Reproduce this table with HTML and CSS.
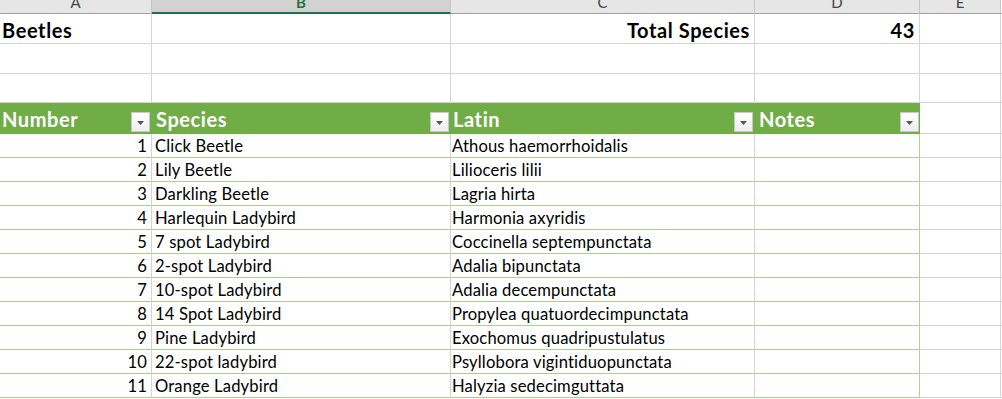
FILE: index.html
```html
<!DOCTYPE html>
<html>
<head>
<meta charset="utf-8">
<link rel="stylesheet" href="styles.css">
</head>
<body>
<div class="sheet">
  <div class="row colhead">
    <div class="ch"><span>A</span></div>
    <div class="ch sel"><span>B</span></div>
    <div class="ch"><span>C</span></div>
    <div class="ch"><span>D</span></div>
    <div class="ch"><span>E</span></div>
    <div class="ch last"></div>
  </div>
  <div class="row tall">
    <div class="c bold">Beetles</div>
    <div class="c"></div>
    <div class="c bold right">Total Species</div>
    <div class="c bold right">43</div>
    <div class="c"></div>
    <div class="c last"></div>
  </div>
  <div class="row tall">
    <div class="c"></div><div class="c"></div><div class="c"></div><div class="c"></div><div class="c"></div><div class="c last"></div>
  </div>
  <div class="row r3">
    <div class="c"></div><div class="c"></div><div class="c"></div><div class="c"></div><div class="c"></div><div class="c last"></div>
  </div>
  <div class="row thead">
    <div class="h"><span>Number</span><i class="dd"><svg width="7" height="4" viewBox="0 0 7 4"><path d="M0 0H7L3.5 4Z" fill="#555"/></svg></i></div>
    <div class="h"><span>Species</span><i class="dd"><svg width="7" height="4" viewBox="0 0 7 4"><path d="M0 0H7L3.5 4Z" fill="#555"/></svg></i></div>
    <div class="h hc"><span>Latin</span><i class="dd"><svg width="7" height="4" viewBox="0 0 7 4"><path d="M0 0H7L3.5 4Z" fill="#555"/></svg></i></div>
    <div class="h hd"><span>Notes</span><i class="dd"><svg width="7" height="4" viewBox="0 0 7 4"><path d="M0 0H7L3.5 4Z" fill="#555"/></svg></i></div>
    <div class="c"></div>
    <div class="c last"></div>
  </div>
  <div class="row data"><div class="c t right">1</div><div class="c t">Click Beetle</div><div class="c t tc">Athous haemorrhoidalis</div><div class="c t td"></div><div class="c"></div><div class="c last"></div></div>
  <div class="row data"><div class="c t right">2</div><div class="c t">Lily Beetle</div><div class="c t tc">Lilioceris lilii</div><div class="c t td"></div><div class="c"></div><div class="c last"></div></div>
  <div class="row data"><div class="c t right">3</div><div class="c t">Darkling Beetle</div><div class="c t tc">Lagria hirta</div><div class="c t td"></div><div class="c"></div><div class="c last"></div></div>
  <div class="row data"><div class="c t right">4</div><div class="c t">Harlequin Ladybird</div><div class="c t tc">Harmonia axyridis</div><div class="c t td"></div><div class="c"></div><div class="c last"></div></div>
  <div class="row data"><div class="c t right">5</div><div class="c t">7 spot Ladybird</div><div class="c t tc">Coccinella septempunctata</div><div class="c t td"></div><div class="c"></div><div class="c last"></div></div>
  <div class="row data"><div class="c t right">6</div><div class="c t">2-spot Ladybird</div><div class="c t tc">Adalia bipunctata</div><div class="c t td"></div><div class="c"></div><div class="c last"></div></div>
  <div class="row data"><div class="c t right">7</div><div class="c t">10-spot Ladybird</div><div class="c t tc">Adalia decempunctata</div><div class="c t td"></div><div class="c"></div><div class="c last"></div></div>
  <div class="row data"><div class="c t right">8</div><div class="c t">14 Spot Ladybird</div><div class="c t tc">Propylea quatuordecimpunctata</div><div class="c t td"></div><div class="c"></div><div class="c last"></div></div>
  <div class="row data"><div class="c t right">9</div><div class="c t">Pine Ladybird</div><div class="c t tc">Exochomus quadripustulatus</div><div class="c t td"></div><div class="c"></div><div class="c last"></div></div>
  <div class="row data"><div class="c t right">10</div><div class="c t">22-spot ladybird</div><div class="c t tc">Psyllobora vigintiduopunctata</div><div class="c t td"></div><div class="c"></div><div class="c last"></div></div>
  <div class="row data"><div class="c t right">11</div><div class="c t">Orange Ladybird</div><div class="c t tc">Halyzia sedecimguttata</div><div class="c t td"></div><div class="c"></div><div class="c last"></div></div>
</div>
</body>
</html>
```
FILE: styles.css
```css
* { box-sizing: border-box; margin: 0; padding: 0; }
html, body { background: #fff; }
body { font-family: "Lato", "Liberation Sans", sans-serif; color: #000; overflow: hidden; width: 1002px; height: 399px; }

.sheet { display: flex; flex-direction: column; }
.row {
  display: grid;
  grid-template-columns: 152px 299px 304px 165px 81px 1fr;
}
.colhead { height: 14px; }
.tall { height: 30px; }
.r3 { height: 29px; }
.thead { height: 31px; }
.data { height: 24px; }

.ch {
  background: #e6e6e6;
  border-right: 1px solid #c6c6c6;
  border-bottom: 1px solid #a0a0a0;
  overflow: hidden;
  display: flex;
  justify-content: center;
  align-items: flex-end;
  font-size: 15px;
  color: #444;
}
.ch span { line-height: 1; margin-bottom: 3px; }
.ch.sel { background: #d2d2d2; border-bottom: 2px solid #217346; color: #217346; font-weight: 700; }
.ch.sel span { margin-bottom: 2px; }
.ch.last { border-right: none; background: #fff; }

.c {
  border-right: 1px solid #d4d4d4;
  border-bottom: 1px solid #d4d4d4;
  display: flex;
  align-items: flex-end;
  padding: 0 3px 2px 2px;
  font-size: 16.6px;
  letter-spacing: 0.15px;
  line-height: 1;
  white-space: nowrap;
}
.c.last { border-right: none; }
.c.bold { font-weight: 700; font-size: 20px; letter-spacing: 0.6px; padding-bottom: 3px; }
.c.right { justify-content: flex-end; padding-right: 4px; }
.c.t { border-bottom-color: #a9d08e; padding-left: 3px; }
.c.tc { padding-left: 1px; }
.c.td { border-right-color: #b7cf97; }

.h {
  background: #70ad47;
  color: #fff;
  font-weight: 700;
  font-size: 20px;
  letter-spacing: 0.6px;
  line-height: 1;
  display: flex;
  justify-content: space-between;
  align-items: flex-end;
  padding: 0 2px 2px 2px;
}
.h span { margin-bottom: 3px; }
.h + .h span { padding-left: 2px; }
.h.hc span { padding-left: 0; }
.hd { padding-right: 0; border-right: 1px solid #70ad47; }
.dd {
  width: 19px;
  height: 20px;
  background: linear-gradient(#ffffff, #eeeeee);
  border: 1px solid #c8c8c8;
  display: flex;
  align-items: center;
  justify-content: center;
}
.dd svg { display: block; margin-top: 1px; }
```
